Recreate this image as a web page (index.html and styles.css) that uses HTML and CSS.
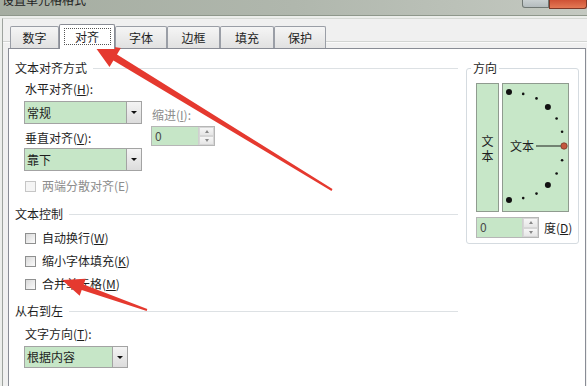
FILE: index.html
```html
<!DOCTYPE html>
<html>
<head>
<meta charset="utf-8">
<link rel="stylesheet" href="styles.css">
</head>
<body>
<div class="titlebar">
  <div class="title">设置单元格格式</div>
  <div class="caption">
    <div class="cbtn min"></div>
    <div class="cbtn close"></div>
  </div>
</div>
<div class="frame">
  <div class="tabs">
    <div class="tab t1">数字</div>
    <div class="tab active"><span class="focus">对齐</span></div>
    <div class="tab t3">字体</div>
    <div class="tab t4">边框</div>
    <div class="tab t5">填充</div>
    <div class="tab t6">保护</div>
  </div>
  <div class="panel">
    <div class="left">
      <div class="ghead"><span>文本对齐方式</span><i class="rule"></i></div>
      <div class="align">
        <div class="col1">
          <div class="lbl">水平对齐(<u>H</u>):</div>
          <div class="combo c1"><span class="val">常规</span><b class="drop"></b></div>
          <div class="lbl l2">垂直对齐(<u>V</u>):</div>
          <div class="combo c2"><span class="val">靠下</span><b class="drop"></b></div>
        </div>
        <div class="col2">
          <div class="lbl dis">缩进(<u>I</u>):</div>
          <div class="spin s1"><span class="val">0</span><span class="spinbtns"><b class="up"></b><b class="dn"></b></span></div>
        </div>
      </div>
      <div class="chk dis m7"><i class="box"></i>两端分散对齐(E)</div>
      <div class="ghead m12"><span>文本控制</span><i class="rule"></i></div>
      <div class="chk m8"><i class="box"></i>自动换行(<u>W</u>)</div>
      <div class="chk m7"><i class="box"></i>缩小字体填充(<u>K</u>)</div>
      <div class="chk m7"><i class="box"></i>合并单元格(<u>M</u>)</div>
      <div class="ghead m11"><span>从右到左</span><i class="rule"></i></div>
      <div class="lbl ind m7">文字方向(<u>T</u>):</div>
      <div class="combo c3"><span class="val">根据内容</span><b class="drop"></b></div>
    </div>
    <fieldset class="orient">
      <legend>方向</legend>
      <div class="oinner">
        <div class="orow">
          <div class="vtext"><span>文</span><span>本</span></div>
          <div class="dial">
            <svg width="65" height="127" viewBox="0 0 65 127">
              <circle cx="6" cy="8" r="3" fill="#111"/>
              <circle cx="20.2" cy="9.9" r="1.3" fill="#111"/>
              <circle cx="33.5" cy="14.4" r="1.3" fill="#111"/>
              <circle cx="44.9" cy="23.1" r="3" fill="#111"/>
              <circle cx="53.6" cy="34.5" r="1.3" fill="#111"/>
              <circle cx="59.1" cy="47.8" r="1.3" fill="#111"/>
              <circle cx="61" cy="62" r="3.2" fill="#c4583f" stroke="#7a3a2a" stroke-width="0.8"/>
              <circle cx="59.1" cy="76.2" r="1.3" fill="#111"/>
              <circle cx="53.6" cy="89.5" r="1.3" fill="#111"/>
              <circle cx="44.9" cy="100.9" r="3" fill="#111"/>
              <circle cx="33.5" cy="109.6" r="1.3" fill="#111"/>
              <circle cx="20.2" cy="114.1" r="1.3" fill="#111"/>
              <circle cx="6" cy="116" r="3" fill="#111"/>
              <line x1="33" y1="62" x2="58" y2="62" stroke="#5d6b5d" stroke-width="1.6"/>
              <text x="7" y="66.5" font-size="12" fill="#1e1e1e" font-family="Noto Sans CJK SC, sans-serif">文本</text>
            </svg>
          </div>
        </div>
        <div class="drow">
          <div class="spin s2"><span class="val">0</span><span class="spinbtns"><b class="up"></b><b class="dn"></b></span></div>
          <span class="deg">度(<u>D</u>)</span>
        </div>
      </div>
    </fieldset>
  </div>
</div>
<svg class="arrows" width="587" height="386" viewBox="0 0 587 386">
  <polygon fill="#e5392f" points="332.5,189.1 117,54.5 120.9,48.1 93,44 109.5,66.9 113.4,60.5 331.5,190.9"/>
  <polygon fill="#e5392f" points="147.3,309.1 83.7,284.5 85.7,278.8 62,280 79.7,295.8 81.7,290.1 146.7,310.9"/>
</svg>
</body>
</html>
```

FILE: styles.css
```css
* { box-sizing: border-box; margin: 0; padding: 0; }
html, body { width: 587px; height: 386px; overflow: hidden; }
body {
  position: relative;
  background: #eceeeb;
  font-family: "Noto Sans CJK SC", "Microsoft YaHei", sans-serif;
  font-size: 12px;
  line-height: 16px;
  color: #1e1e1e;
}
u { text-decoration: underline; }

.titlebar {
  height: 16px;
  display: flex;
  justify-content: space-between;
  align-items: flex-start;
  background: linear-gradient(to right, #a5ada1, #b0b7ad 50%, #c4c9c1);
  border-bottom: 1px solid #8e978b;
  overflow: hidden;
}
.title { margin: -6px 0 0 2px; font-size: 12px; line-height: 12px; color: #222; }
.caption { display: flex; }
.cbtn.min {
  width: 27px; height: 8px;
  background: linear-gradient(#c9d0d1, #b4bcbe);
  border: 1px solid #6f7773; border-top: none;
  border-radius: 0 0 0 3px;
}
.cbtn.close {
  width: 38px; height: 9px;
  background: linear-gradient(#cf5236, #e47955);
  border: 1px solid #7d3828; border-top: none;
  border-radius: 0 0 3px 0;
}

.frame {
  margin: 2px 0 0 2px;
  border-top: 1px solid #d6d9d5;
  border-left: 1px solid #9ea39e;
  background: #f0f0f0;
}
.tabs {
  height: 29px;
  display: flex;
  align-items: flex-end;
  padding-left: 7px;
  background: linear-gradient(to bottom, transparent 22px, #d2d4d2 22px, #d2d4d2 23px, #fafafa 23px, #fafafa 24px, transparent 24px);
}
.tab {
  height: 22px;
  display: flex;
  align-items: center;
  justify-content: center;
  border: 1px solid #9a9ea6;
  border-bottom: none;
  border-radius: 2px 2px 0 0;
  background: linear-gradient(#f5f5f5, #e1e1e1);
}
.t1 { width: 49px; }
.t3 { width: 52px; }
.t4 { width: 53px; }
.t5 { width: 54px; }
.t6 { width: 52px; }
.tab.active {
  width: 56px;
  height: 25px;
  margin-bottom: -1px;
  position: relative;
  z-index: 2;
  background: #fff;
  border-color: #898c95;
  align-items: flex-start;
  padding-top: 3px;
}
.focus {
  display: block;
  width: 47px;
  height: 17px;
  line-height: 15px;
  text-align: center;
  border: 1px dotted #555;
}

.panel {
  margin-left: 5px;
  width: 578px;
  height: 340px;
  background: #fff;
  border: 1px solid #898c95;
  display: flex;
  align-items: flex-start;
  padding-top: 11px;
}
.left { width: 451px; padding: 0 2px 0 6px; display: flex; flex-direction: column; }
.ghead { display: flex; align-items: center; height: 16px; }
.ghead .rule { flex: 1; height: 1px; background: #dde1e4; margin-left: 6px; box-shadow: 0 1px 0 #fff; }
.m7 { margin-top: 7px; }
.m8 { margin-top: 8px; }
.m11 { margin-top: 11px; }
.m12 { margin-top: 12px; }

.align { display: flex; margin: 5px 0 0 9px; }
.col1 { width: 118px; display: flex; flex-direction: column; }
.col2 { margin-left: 9px; padding-top: 26px; display: flex; flex-direction: column; }
.lbl { height: 16px; padding-left: 1px; white-space: nowrap; }
.lbl.l2 { margin-top: 6px; }
.lbl.ind { margin-left: 9px; }
.dis { color: #8d8d8d; }

.combo {
  height: 23px;
  border: 1px solid #a3a3a3;
  background: #c6e6c7;
  display: flex;
  margin-top: 4px;
}
.combo.c2 { margin-top: 2px; }
.combo.c3 { width: 104px; height: 22px; margin-left: 9px; }
.combo .val { flex: 1; padding-left: 2px; line-height: 21px; }
.combo.c3 .val { line-height: 20px; }
.drop {
  width: 15px;
  border-left: 1px solid #a3a3a3;
  background: linear-gradient(#f4f4f4, #dcdcdc);
  display: flex;
  align-items: center;
  justify-content: center;
}
.drop::after {
  content: "";
  border-left: 3px solid transparent;
  border-right: 3px solid transparent;
  border-top: 3px solid #111;
}

.spin {
  height: 20px;
  border: 1px solid #b6b6b6;
  background: #c6e6c7;
  display: flex;
  margin-top: 3px;
}
.spin.s1 { width: 64px; }
.spin.s2 { width: 63px; height: 21px; margin-top: 0; }
.spin .val { flex: 1; padding-left: 3px; line-height: 18px; color: #4a4a4a; }
.spinbtns {
  width: 16px;
  display: flex;
  flex-direction: column;
  background: #efefef;
  border-left: 1px solid #cfcfcf;
}
.spinbtns b {
  flex: 1;
  display: flex;
  align-items: center;
  justify-content: center;
  border: 1px solid #d6d6d6;
  background: linear-gradient(#f6f6f6, #e6e6e6);
}
.spinbtns .up::after {
  content: "";
  border-left: 2.5px solid transparent;
  border-right: 2.5px solid transparent;
  border-bottom: 3px solid #888;
}
.spinbtns .dn::after {
  content: "";
  border-left: 2.5px solid transparent;
  border-right: 2.5px solid transparent;
  border-top: 3px solid #888;
}

.chk { display: flex; align-items: center; height: 16px; margin-left: 10px; white-space: nowrap; }
.box {
  width: 11px;
  height: 11px;
  margin-right: 6px;
  border: 1px solid #8f9090;
  background: linear-gradient(135deg, #d9d9d9, #fbfbfb);
}
.chk.dis .box { border-color: #c6c6c6; background: #f5f5f5; }

.orient {
  margin-left: 6px;
  width: 113px;
  border: 1px solid #d5dbe0;
  border-radius: 3px;
  padding: 0;
  min-width: 0;
}
.orient legend { margin-left: 4px; padding: 0 2px; line-height: 16px; }
.oinner { padding: 7px 0 5px 9px; }
.orow { display: flex; gap: 3px; }
.vtext {
  width: 23px;
  height: 129px;
  border: 1px solid #8f9b8f;
  background: #c7e7c8;
  display: flex;
  flex-direction: column;
  align-items: center;
  justify-content: center;
  gap: 2px;
}
.vtext span { display: block; height: 13px; line-height: 13px; }
.dial {
  width: 67px;
  height: 129px;
  border: 1px solid #8f9b8f;
  background: #c7e7c8;
}
.dial svg { display: block; }
.drow { display: flex; align-items: center; margin-top: 5px; }
.deg { margin-left: 5px; }

.arrows { position: absolute; left: 0; top: 0; pointer-events: none; }
```
